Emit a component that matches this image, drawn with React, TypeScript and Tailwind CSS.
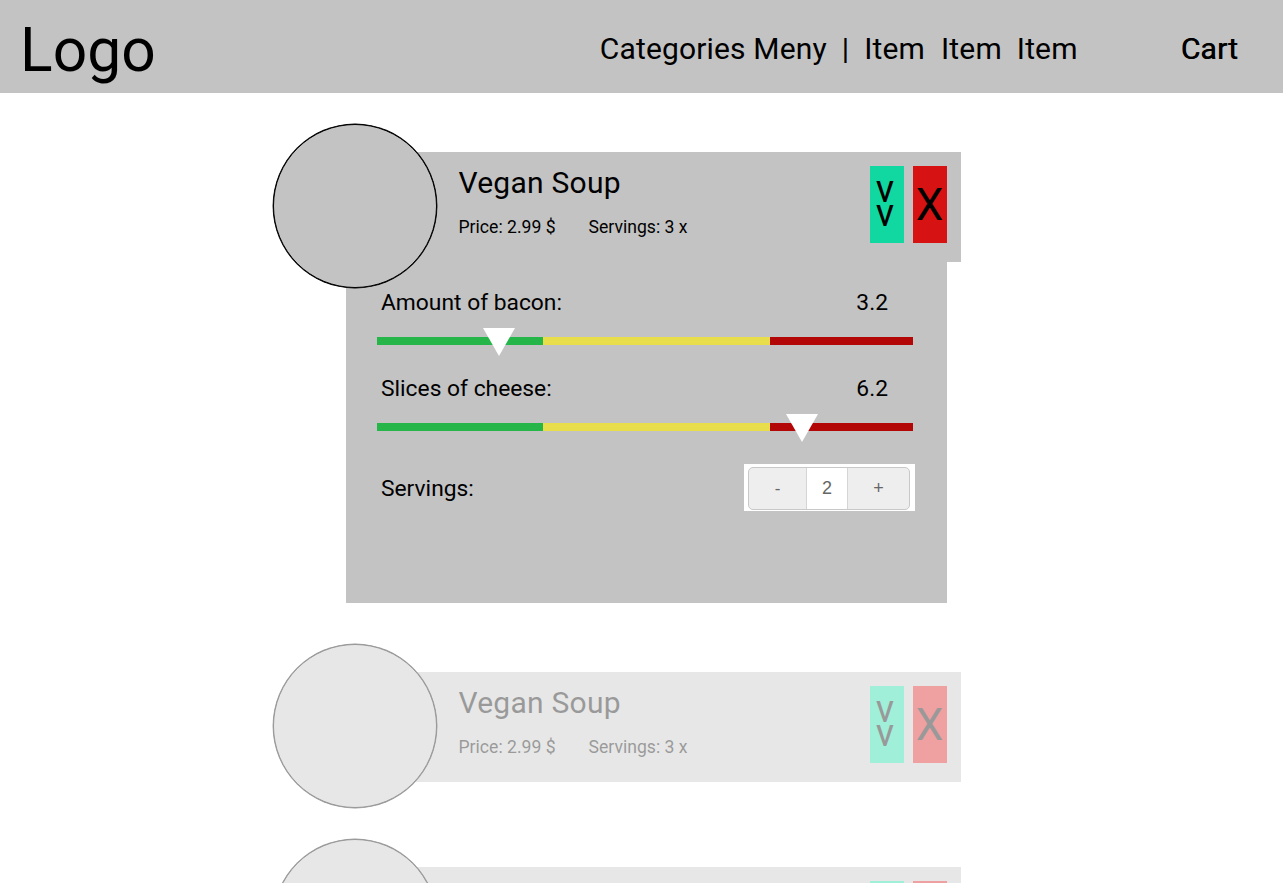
import React from "react";

const font = { fontFamily: "Roboto, sans-serif" };

function Triangle() {
  return (
    <svg width="32" height="28" viewBox="0 0 32 28" className="block">
      <polygon points="0,0 32,0 16,28" fill="#ffffff" />
    </svg>
  );
}

function Head() {
  return (
    <div className="relative z-10 h-[110px] w-[615px] bg-[#c3c3c3] flex justify-between">
      <div className="absolute left-[-73px] top-[-28px] w-[164px] h-[164px] rounded-full bg-[#c3c3c3] border border-black shadow-[0_0_0_0.4px_#000]" />
      <div className="pl-[113px] pt-[13px]">
        <div className="text-[30px] leading-[36px] text-black tracking-[0.25px] ml-[-0.5px]">Vegan Soup</div>
        <div className="mt-[16px] flex gap-[33px] text-[17.6px] leading-[20px] text-black ml-[-0.5px]">
          <span>Price: 2.99 $</span>
          <span>Servings: 3 x</span>
        </div>
      </div>
      <div className="flex gap-[9px] pt-[14px] pr-[14px]">
        <div className="w-[34px] h-[77px] bg-[#11d8a0] flex flex-col items-center pt-[11px] pr-[4px] text-[38px] leading-[24px] text-black">
          <span>v</span>
          <span>v</span>
        </div>
        <div className="w-[34px] h-[77px] bg-[#d71212] flex items-center justify-center text-[44px] leading-none text-black pr-[1px]">
          X
        </div>
      </div>
    </div>
  );
}

function Slider({ label, value, knob, labelMt }: { label: string; value: string; knob: string; labelMt: string }) {
  return (
    <div className={labelMt}>
      <div className="flex justify-between pl-[35px] pr-[59px] text-[22.8px] leading-[26px] text-black">
        <span>{label}</span>
        <span>{value}</span>
      </div>
      <div className="relative mt-[21px] ml-[31px] w-[536px] h-[8px] flex">
        <div className="w-[166px] bg-[#25b548]" />
        <div className="w-[227px] bg-[#e8de4b]" />
        <div className="flex-1 bg-[#b30606]" />
        <div className={`absolute top-[-9px] ${knob}`}>
          <Triangle />
        </div>
      </div>
    </div>
  );
}

function Panel() {
  return (
    <div className="relative w-[601px] h-[341px] bg-[#c3c3c3]">
      <Slider label="Amount of bacon:" value="3.2" knob="left-[106px]" labelMt="pt-[28px]" />
      <Slider label="Slices of cheese:" value="6.2" knob="left-[409px]" labelMt="mt-[31px]" />
      <div className="mt-[33px] flex items-center justify-between pl-[35px] pr-[32px]">
        <span className="text-[22.8px] leading-[26px] text-black mt-[2px]">Servings:</span>
        <div className="w-[171px] h-[47px] bg-white pl-[4px] pt-[3px]">
          <div className="w-[162px] h-[43px] flex rounded-[5px] border border-[#c8c8c8] bg-[#eeeeee] overflow-hidden text-[#666666]" style={{ fontFamily: "'Liberation Sans', sans-serif" }}>
            <div className="w-[57px] flex items-center justify-center text-[17px]">-</div>
            <div className="w-[42px] flex items-center justify-center bg-white border-x border-[#d5d5d5] text-[18px]">2</div>
            <div className="flex-1 flex items-center justify-center text-[18px]">+</div>
          </div>
        </div>
      </div>
    </div>
  );
}

export default function App() {
  return (
    <div className="h-[883px] overflow-hidden bg-white" style={font}>
      <header className="h-[93px] bg-[#c3c3c3] flex pl-[20px] pr-[45px] text-black">
        <div className="text-[60.5px] leading-none mt-[21px] tracking-[0.1px]">Logo</div>
        <nav className="ml-auto flex items-start pt-[34px] text-[30px] leading-[30px] tracking-[0.15px]">
          <span>Categories Meny</span>
          <span className="ml-[15px]">|</span>
          <span className="ml-[15px]">Item</span>
          <span className="ml-[16px]">Item</span>
          <span className="ml-[15px]">Item</span>
          <span className="ml-[103px] tracking-[0.2px] [text-shadow:0.5px_0_0_#000]">Cart</span>
        </nav>
      </header>
      <main className="pl-[346px] pt-[59px]">
        <Head />
        <Panel />
        <div className="mt-[69px] opacity-40">
          <Head />
        </div>
        <div className="mt-[85px] opacity-40">
          <Head />
        </div>
      </main>
    </div>
  );
}
